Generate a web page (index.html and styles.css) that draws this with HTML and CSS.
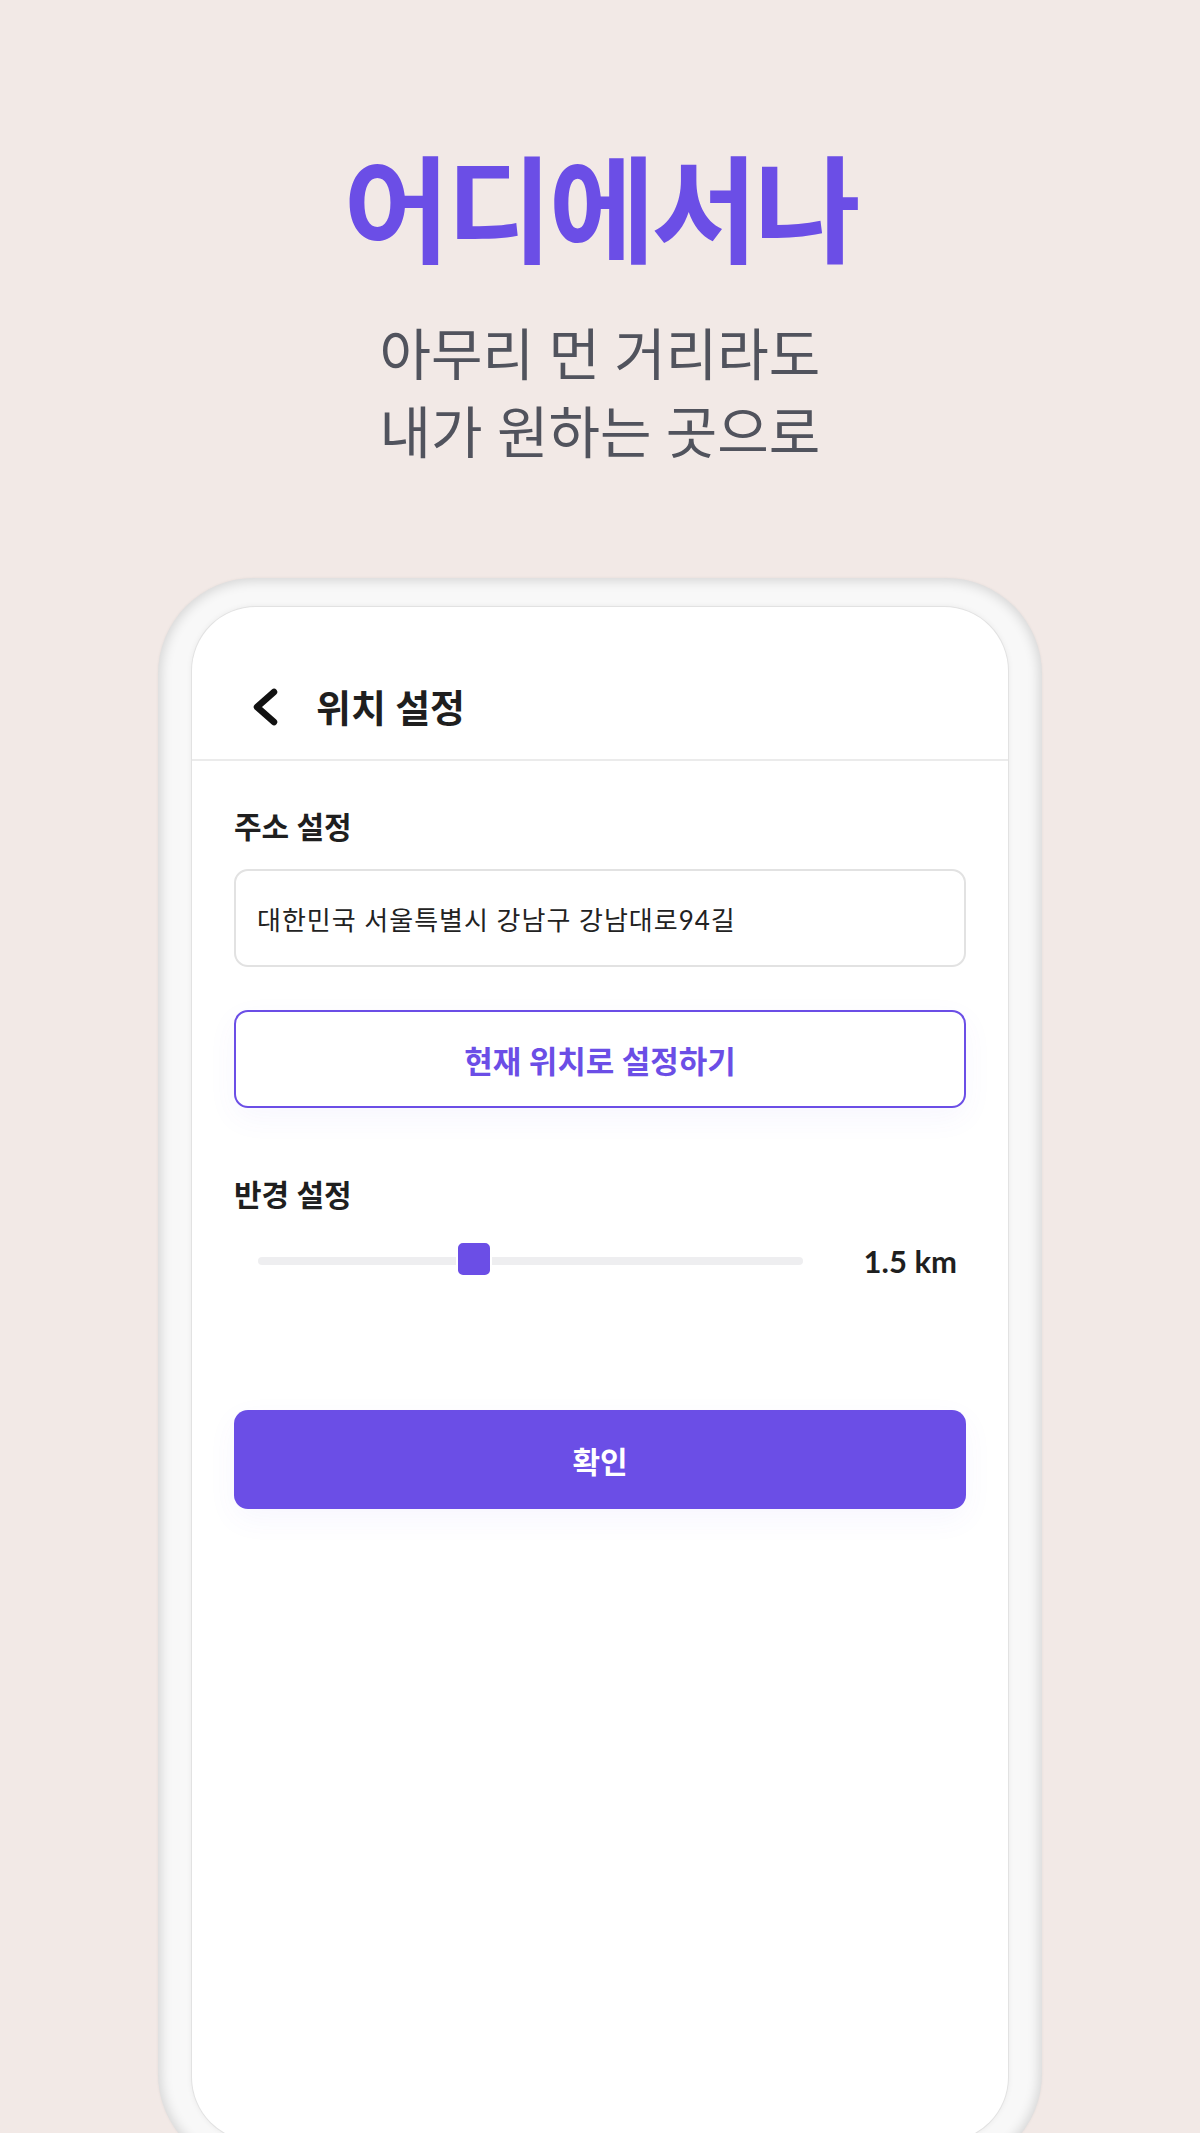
FILE: index.html
```html
<!DOCTYPE html>
<html lang="ko">
<head>
  <meta charset="UTF-8">
  <title>위치 설정</title>
  <link rel="stylesheet" href="styles.css">
</head>
<body>

  <div class="pagina">
    <div class="hero">
      <h1 class="hero-titulo">어디에서나</h1>
      <p class="hero-sub">아무리 먼 거리라도<br>내가 원하는 곳으로</p>
    </div>

    <div class="telefono">
      <div class="pantalla">
        <div class="barra">
          <button class="atras">
            <svg width="30" height="40" viewBox="0 0 30 40">
              <path d="M24 5 L7 20 L24 35" fill="none" stroke="#111" stroke-width="6.5" stroke-linecap="round" stroke-linejoin="round"/>
            </svg>
          </button>
          <h2 class="barra-titulo">위치 설정</h2>
        </div>

        <div class="contenido">
          <div class="etiqueta">주소 설정</div>
          <div class="direccion">대한민국 서울특별시 강남구 강남대로94길</div>
          <button class="btn-borde">현재 위치로 설정하기</button>

          <div class="etiqueta etiqueta-radio">반경 설정</div>
          <div class="fila-radio">
            <div class="pista">
              <span class="perilla" style="left: 36.4%;"></span>
            </div>
            <span class="valor">1.5 km</span>
          </div>

          <button class="btn-lleno">확인</button>
        </div>
      </div>
    </div>
  </div>

</body>
</html>
```

FILE: styles.css
```css
body {
  margin: 0;
  background-color: #f2e9e6;
  font-family: "Lato", "Noto Sans CJK KR", sans-serif;
  color: #1f1f1f;
}

.pagina {
  height: 2133px;
  overflow: hidden;
  display: flex;
  flex-direction: column;
  align-items: center;
}

.hero {
  padding-top: 150px;
  text-align: center;
}

.hero-titulo {
  margin: 0;
  font-size: 116px;
  line-height: 120px;
  font-weight: 700;
  letter-spacing: -4px;
  color: #6b4ee6;
}

.hero-sub {
  margin: 45px 0 0;
  font-size: 56px;
  line-height: 78px;
  font-weight: 400;
  color: #51535d;
}

/* marco del telefono */
.telefono {
  margin-top: 107px;
  width: 816px;
  padding: 29px 34px;
  background-color: #f8f8f8;
  border-radius: 96px;
  box-shadow: inset 0 0 12px 3px rgba(0, 0, 0, 0.14), 0 0 3px rgba(0, 0, 0, 0.06);
}

.pantalla {
  height: 1534px;
  background-color: #fff;
  border-radius: 64px;
  box-shadow: 0 0 0 1px #e2e2e2, 0 0 6px rgba(0, 0, 0, 0.08);
  overflow: hidden;
}

.barra {
  display: flex;
  align-items: center;
  gap: 36px;
  height: 40px;
  padding: 80px 42px 32px 58px;
  border-bottom: 2px solid #ebebeb;
}

.atras {
  display: flex;
  padding: 0;
  border: none;
  background: none;
}

.barra-titulo {
  margin: 0;
  font-size: 38px;
  line-height: 40px;
  font-weight: 700;
  color: #1f1f1f;
}

.contenido {
  display: flex;
  flex-direction: column;
  padding: 0 42px;
}

.etiqueta {
  margin-top: 45px;
  font-size: 30px;
  line-height: 40px;
  font-weight: 700;
}

.direccion {
  display: flex;
  align-items: center;
  height: 94px;
  margin-top: 23px;
  padding: 0 21px;
  border: 2px solid #e2e2e2;
  border-radius: 14px;
  font-size: 26px;
  letter-spacing: 1px;
  color: #222;
}

.btn-borde,
.btn-lleno {
  height: 98px;
  border-radius: 14px;
  font-family: inherit;
  font-size: 31px;
  font-weight: 700;
  cursor: pointer;
  box-shadow: 0 10px 30px rgba(107, 78, 230, 0.05);
}

.btn-borde {
  margin-top: 43px;
  background-color: #fff;
  border: 2px solid #6b4ee6;
  color: #6b4ee6;
}

.etiqueta-radio {
  margin-top: 66px;
}

.fila-radio {
  display: flex;
  align-items: center;
  height: 40px;
  margin-top: 27px;
}

.pista {
  position: relative;
  flex: 0 0 545px;
  height: 8px;
  margin-left: 24px;
  background-color: #eeeef0;
  border-radius: 4px;
}

.perilla {
  position: absolute;
  top: -16px;
  width: 36px;
  height: 36px;
  box-sizing: border-box;
  background-color: #6b4ee6;
  border: 2px solid #fff;
  border-radius: 7px;
}

.valor {
  margin-left: auto;
  margin-right: 9px;
  font-size: 31px;
  font-weight: 700;
  color: #1f1f1f;
}

.btn-lleno {
  margin-top: 129px;
  height: 99px;
  font-size: 30px;
  background-color: #6b4ee6;
  border: none;
  color: #fff;
}
```
